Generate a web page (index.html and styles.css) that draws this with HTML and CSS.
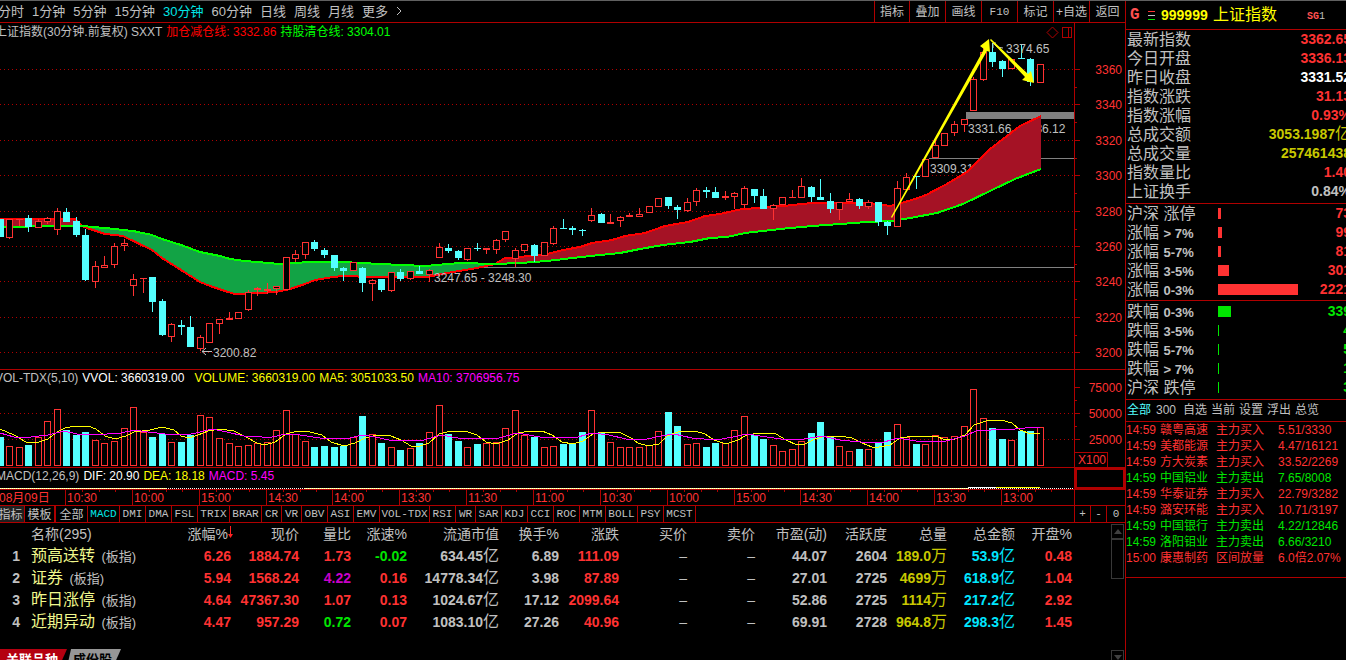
FILE: index.html
```html
<!DOCTYPE html>
<html lang="zh-CN">
<head>
<meta charset="utf-8">
<title>上证指数 999999</title>
<link rel="stylesheet" href="styles.css">
</head>
<body>
<div class="app">
<main class="main">
  <nav class="toolbar">
    <div class="periods">
      <button>分时</button><button>1分钟</button><button>5分钟</button><button>15分钟</button><button class="on">30分钟</button><button>60分钟</button><button>日线</button><button>周线</button><button>月线</button><button>更多</button>
      <button aria-label="展开"><svg width="6" height="10" viewBox="0 0 6 10"><path d="M1 1L5 5L1 9" fill="none" stroke="#c0c0c0"/></svg></button>
    </div>
    <div class="tools">
      <button>指标</button><button>叠加</button><button>画线</button><button class="mono">F10</button><button>标记</button><button>+自选</button><button>返回</button>
    </div>
  </nav>

  <section class="pane">
    <div class="legend first"><span>上证指数(30分钟.前复权) SXXT</span><span class="pure-red">加仓减仓线: 3332.86</span><span class="lime">持股清仓线: 3304.01</span></div>
    <svg class="plot" viewBox="0 23 1125 347">
      <g class="grid">
        <path d="M0 69.5H1074M0 104.5H1074M0 140.5H1074M0 175.5H1074M0 211.5H1074M0 246.5H1074M0 281.5H1074M0 317.5H1074M0 352.5H1074"/>
      </g>
      <path class="axis" d="M1074.5 23V370M0 369.5H1125M1075 69.5h5M1075 104.5h5M1075 140.5h5M1075 175.5h5M1075 211.5h5M1075 246.5h5M1075 281.5h5M1075 317.5h5M1075 352.5h5M1075 87.5h2M1075 122.5h2M1075 158.5h2M1075 193.5h2M1075 229.5h2M1075 264.5h2M1075 299.5h2M1075 335.5h2"/>
      <g class="scale">
        <text x="1122" y="74">3360</text><text x="1122" y="109">3340</text><text x="1122" y="145">3320</text><text x="1122" y="180">3300</text><text x="1122" y="216">3280</text><text x="1122" y="251">3260</text><text x="1122" y="286">3240</text><text x="1122" y="322">3220</text><text x="1122" y="357">3200</text>
      </g>
      <g class="gap">
        <rect x="966" y="112" width="108" height="7"/>
        <rect x="929" y="158" width="145" height="1"/>
        <rect x="483" y="267" width="591" height="1"/>
      </g>
      <g class="note">
        <text x="968" y="133">3331.66 - 3336.12</text>
        <text x="930" y="173">3309.31</text>
      </g>
      <g id="band"></g>
      <g class="note"><text x="434" y="282">3247.65 - 3248.30</text></g>
      <g id="candles"></g>
      <g class="note">
        <text x="1006" y="53">3374.65</text>
        <text x="213" y="357">3200.82</text>
        <path d="M202 351.5H212M206 348L202 351.5L206 355M993 48V43H996M993 43L997 47L1003 48"/>
      </g>
      <g class="arrow">
        <path d="M891 217L892 218L987 51L990 52L989 39L980 46L984 49Z"/>
        <path d="M990 40L991 39L1028 74L1031 71L1034 83L1022 80L1025 77Z"/>
      </g>
      <path class="axis smooth" d="M1052.500 27L1058 32.500L1052.500 38L1047 32.500Z"/>
      <path class="axis" d="M1062.500 27.500H1071.500V37.500H1062.500ZM1068.500 28V37"/>
    </svg>
  </section>

  <section class="pane">
    <div class="legend second"><span>VOL-TDX(5,10)</span><span class="white wide">VVOL: 3660319.00</span><span class="yellow">VOLUME: 3660319.00</span><span class="yellow">MA5: 3051033.50</span><span class="pink">MA10: 3706956.75</span></div>
    <svg class="plot" viewBox="0 370 1125 98">
      <path class="grid" d="M0 413.5H1074M0 439.5H1074"/>
      <path class="axis" d="M1074.500 370V468M0 467.500H1125M1075 387.500h5M1075 413.500h5M1075 439.500h5M1075 400.500h2M1075 426.500h2M1075 452.500H1107.500V467"/>
      <g class="scale"><text x="1122" y="392">75000</text><text x="1122" y="418">50000</text><text x="1122" y="444">25000</text><text x="1106" y="464">X100</text></g>
      <g id="volume"></g>
      <g id="averages"></g>
    </svg>
  </section>

  <section class="pane">
    <div class="legend third"><span>MACD(12,26,9)</span><span class="white">DIF: 20.90</span><span class="yellow">DEA: 18.18</span><span class="pink">MACD: 5.45</span></div>
    <svg class="plot" viewBox="0 468 1125 22">
      <path class="axis" d="M0 489.500H1125M1074.500 468V490"/>
      <rect class="axis focus" x="1076" y="469" width="48" height="19"/>
      <path d="M0 488.500H166M305 488.500H968" stroke="#ffff60" fill="none"/>
      <path d="M0 488.500H1074" stroke="#fff" stroke-dasharray="1 1" fill="none"/>
      <path d="M968 487.500H996" stroke="#fff" fill="none"/>
      <path d="M996 487.500H1040" stroke="#ff0" fill="none"/>
    </svg>
  </section>

  <svg class="plot" viewBox="0 490 1125 16">
    <g id="times" class="times"></g>
    <path class="axis" d="M0 505.500H1125M1074.500 490V506"/>
  </svg>

  <nav class="indicators">
    <button class="cjk cur">指标</button><button class="cjk mid">模板</button><button class="cjk last">全部</button><button class="n4 on">MACD</button><button class="n3">DMI</button><button class="n3">DMA</button><button class="n3">FSL</button><button class="n4">TRIX</button><button class="n4">BRAR</button><button class="n2">CR</button><button class="n2">VR</button><button class="n3">OBV</button><button class="n3">ASI</button><button class="n3">EMV</button><button class="n7">VOL-TDX</button><button class="n3">RSI</button><button class="n2">WR</button><button class="n3">SAR</button><button class="n3">KDJ</button><button class="n3">CCI</button><button class="n3">ROC</button><button class="n3">MTM</button><button class="n4">BOLL</button><button class="n3">PSY</button><button class="n4">MCST</button>
    <div class="zoomers"><button>+</button><button>-</button><button>0</button></div>
  </nav>

  <section class="related">
    <table class="stocks">
      <colgroup><col class="c-no"><col><col class="c-chg"><col class="c-price"><col class="c-vr"><col class="c-spd"><col class="c-cap"><col class="c-60"><col class="c-60"><col class="c-68"><col class="c-68"><col class="c-pe"><col class="c-act"><col class="c-60"><col class="c-68"><col class="c-57"></colgroup>
      <thead><tr><th></th><th class="name">名称(295)</th><th class="sorted">涨幅%<svg width="5" height="13" viewBox="0 0 5 13"><path d="M2 0H3V8H5L2.500 12L0 8H2Z" fill="#f22"/></svg></th><th>现价</th><th>量比</th><th>涨速%</th><th>流通市值</th><th>换手%</th><th>涨跌</th><th>买价</th><th>卖价</th><th>市盈(动)</th><th>活跃度</th><th>总量</th><th>总金额</th><th>开盘%</th></tr></thead>
      <tbody>
        <tr><td class="no">1</td><td class="name">预高送转 <small>(板指)</small></td><td class="red">6.26</td><td class="red">1884.74</td><td class="red">1.73</td><td class="green">-0.02</td><td>634.45<i>亿</i></td><td>6.89</td><td class="red">111.09</td><td class="none">–</td><td class="none">–</td><td>44.07</td><td>2604</td><td class="gold">189.0<i>万</i></td><td class="aqua">53.9<i>亿</i></td><td class="red">0.48</td></tr>
        <tr><td class="no">2</td><td class="name">证券 <small>(板指)</small></td><td class="red">5.94</td><td class="red">1568.24</td><td class="purple">4.22</td><td class="red">0.16</td><td>14778.34<i>亿</i></td><td>3.98</td><td class="red">87.89</td><td class="none">–</td><td class="none">–</td><td>27.01</td><td>2725</td><td class="gold">4699<i>万</i></td><td class="aqua">618.9<i>亿</i></td><td class="red">1.04</td></tr>
        <tr><td class="no">3</td><td class="name">昨日涨停 <small>(板指)</small></td><td class="red">4.64</td><td class="red">47367.30</td><td class="red">1.07</td><td class="red">0.13</td><td>1024.67<i>亿</i></td><td>17.12</td><td class="red">2099.64</td><td class="none">–</td><td class="none">–</td><td>52.86</td><td>2725</td><td class="gold">1114<i>万</i></td><td class="aqua">217.2<i>亿</i></td><td class="red">2.92</td></tr>
        <tr><td class="no">4</td><td class="name">近期异动 <small>(板指)</small></td><td class="red">4.47</td><td class="red">957.29</td><td class="green">0.72</td><td class="red">0.07</td><td>1083.10<i>亿</i></td><td>27.26</td><td class="red">40.96</td><td class="none">–</td><td class="none">–</td><td>69.91</td><td>2728</td><td class="gold">964.8<i>万</i></td><td class="aqua">298.3<i>亿</i></td><td class="red">1.45</td></tr>
      </tbody>
    </table>
    <div class="scroll">
      <button aria-label="向上"><svg width="8" height="5" viewBox="0 0 8 5"><path d="M4 0L8 5H0Z" fill="#404040"/></svg></button>
      <div class="thumb"></div>
      <button class="down" aria-label="向下"><svg width="8" height="5" viewBox="0 0 8 5"><path d="M0 0H8L4 5Z" fill="#404040"/></svg></button>
    </div>
  </section>
  <nav class="sheets"><button class="active">关联品种</button><button>成份股</button></nav>
</main>

<aside class="side">
  <header class="symbol">
    <b class="g">G</b>
    <svg width="7" height="9" viewBox="0 0 7 9"><path d="M0 .5H7" stroke="#ff3232"/><path d="M0 4.500H7" stroke="#c0c0c0"/><path d="M0 8.500H7" stroke="#00e600"/></svg>
    <b class="code">999999</b><span class="title">上证指数</span><span class="sg"><b>SG</b>1</span>
  </header>
  <table class="quote">
    <tr><th>最新指数</th><td class="red">3362.65</td></tr>
    <tr><th>今日开盘</th><td class="red">3336.13</td></tr>
    <tr><th>昨日收盘</th><td class="white">3331.52</td></tr>
    <tr><th>指数涨跌</th><td class="red">31.13</td></tr>
    <tr><th>指数涨幅</th><td class="red">0.93%</td></tr>
    <tr><th>总成交额</th><td class="gold">3053.1987<i>亿</i></td></tr>
    <tr><th>总成交量</th><td class="gold">257461438</td></tr>
    <tr><th>指数量比</th><td class="red">1.40</td></tr>
    <tr><th>上证换手</th><td>0.84%</td></tr>
  </table>
  <table class="quote spread up">
    <tr><th>沪深 涨停</th><td class="bar"><div style="width:3px"></div></td><td>73</td></tr>
    <tr><th>涨幅 <b>&gt; 7%</b></th><td class="bar"><div style="width:4px"></div></td><td>99</td></tr>
    <tr><th>涨幅 <b>5-7%</b></th><td class="bar"><div style="width:3px"></div></td><td>81</td></tr>
    <tr><th>涨幅 <b>3-5%</b></th><td class="bar"><div style="width:11px"></div></td><td>301</td></tr>
    <tr><th>涨幅 <b>0-3%</b></th><td class="bar"><div style="width:80px"></div></td><td>2221</td></tr>
  </table>
  <table class="quote spread fall">
    <tr><th>跌幅 <b>0-3%</b></th><td class="bar"><div style="width:13px"></div></td><td>339</td></tr>
    <tr><th>跌幅 <b>3-5%</b></th><td class="bar"><div style="width:1px"></div></td><td>4</td></tr>
    <tr><th>跌幅 <b>5-7%</b></th><td class="bar"><div style="width:1px"></div></td><td>5</td></tr>
    <tr><th>跌幅 <b>&gt; 7%</b></th><td class="bar"><div style="width:1px"></div></td><td>1</td></tr>
    <tr><th>沪深 跌停</th><td class="bar"><div style="width:1px"></div></td><td>3</td></tr>
  </table>
  <nav class="filters"><button class="on">全部</button><button class="count">300</button><button>自选</button><button>当前</button><button>设置</button><button>浮出</button><button>总览</button></nav>
  <table class="feed">
    <tr class="red"><td>14:59</td><td>赣粤高速</td><td>主力买入</td><td>5.51/3330</td></tr>
    <tr class="red"><td>14:59</td><td>美都能源</td><td>主力买入</td><td>4.47/16121</td></tr>
    <tr class="red"><td>14:59</td><td>方大炭素</td><td>主力买入</td><td>33.52/2269</td></tr>
    <tr class="green"><td>14:59</td><td>中国铝业</td><td>主力卖出</td><td>7.65/8008</td></tr>
    <tr class="red"><td>14:59</td><td>华泰证券</td><td>主力买入</td><td>22.79/3282</td></tr>
    <tr class="red"><td>14:59</td><td>潞安环能</td><td>主力买入</td><td>10.71/3197</td></tr>
    <tr class="green"><td>14:59</td><td>中国银行</td><td>主力卖出</td><td>4.22/12846</td></tr>
    <tr class="green"><td>14:59</td><td>洛阳钼业</td><td>主力卖出</td><td>6.66/3210</td></tr>
    <tr class="red"><td>15:00</td><td>康惠制药</td><td>区间放量</td><td>6.0倍2.07%</td></tr>
  </table>
</aside>
</div>
<script src="chart.js"></script>
</body>
</html>
```
FILE: styles.css
```css
* { box-sizing: border-box; }
body {
  margin: 0;
  background: #000;
  color: #c0c0c0;
  font: 12px/16px "Liberation Sans", "Noto Sans CJK SC", sans-serif;
  overflow: hidden;
}
button {
  background: none;
  border: 0;
  padding: 0;
  margin: 0;
  color: inherit;
  font: inherit;
  white-space: nowrap;
}
table { border-collapse: separate; border-spacing: 0; }
th, td { padding: 0; font-weight: normal; white-space: nowrap; }
i { font-style: normal; font-weight: 400; font-size: 16px; }

.app {
  display: grid;
  grid-template-columns: minmax(0, 1fr) 221px;
  height: 100vh;
  border-top: 1px solid #606060;
  overflow: hidden;
}
.main { display: flex; flex-direction: column; min-height: 0; overflow: hidden; }

.red { color: #ff3232; }
.green { color: #00e600; }
.gold { color: #c8c800; }
.aqua { color: #00e6ff; }
.purple { color: #c800c8; }
.white { color: #fff; }
.yellow { color: #ff0; }
.pink { color: #f0f; }
.pure-red { color: #f00; }
.lime { color: #0f0; }
.on { color: #00e6e6; }

.toolbar {
  flex: none;
  display: flex;
  justify-content: space-between;
  height: 22px;
  border-bottom: 1px solid #b00000;
}
.periods { display: flex; align-items: center; gap: 8px; margin-left: -2px; font-size: 13px; }
.tools { display: flex; }
.tools button { width: 36px; border-left: 1px solid #b00000; }
.tools button:first-child { width: 35px; }
.mono { font-family: "Liberation Mono", monospace; font-size: 11px; }

.pane { flex: none; display: grid; position: relative; }
.pane > * { grid-area: 1 / 1; }
.legend { z-index: 1; display: flex; gap: 4px; white-space: nowrap; height: 16px; }
.first { margin-left: -5px; padding-top: 1px; }
.second { margin-left: -5px; }
.second .wide { margin-right: 6px; }
.third { margin-left: -4px; }

.plot { display: block; flex: none; width: 100%; height: auto; shape-rendering: crispEdges; }
.grid { stroke: #b00000; stroke-dasharray: 1 3; fill: none; }
.axis { stroke: #b00000; fill: none; }
.focus { stroke-width: 2; }
.smooth, .arrow { shape-rendering: geometricPrecision; }
.scale { fill: #ff3232; text-anchor: end; }
.gap { fill: #808080; }
.note { fill: #c0c0c0; }
.note path { fill: none; stroke: #c0c0c0; shape-rendering: auto; }
.arrow { fill: #ff0; }
.times { fill: #ff3232; }
.times path { fill: none; stroke: #b00000; }

.rise { fill: #000; stroke: #ff3232; }
.fall-body { fill: #54ffff; stroke: #54ffff; }

.indicators { flex: none; display: flex; height: 17px; border-bottom: 1px solid #b00000; line-height: 16px; }
.indicators button { border-right: 1px solid #b00000; font-family: "Liberation Mono", monospace; font-size: 11px; }
.indicators .cjk { width: 32px; font: 12px/16px "Noto Sans CJK SC", sans-serif; }
.indicators .cur { width: 25px; background: #202020; text-indent: -3px; }
.indicators .mid { width: 31px; border-right-width: 2px; }
.indicators .n2 { width: 20px; }
.indicators .n3 { width: 26px; }
.indicators .n4 { width: 32px; }
.indicators .n7 { width: 50px; }
.zoomers { display: flex; margin-left: auto; border-left: 1px solid #b00000; }
.zoomers button { width: 16px; }
.zoomers button:last-child { width: 18px; border-right: 0; }

.related { flex: 1 1 0; min-height: 0; display: flex; gap: 39px; }
.stocks { flex: 1; table-layout: fixed; align-self: flex-start; text-align: right; }
.stocks th { height: 22px; font-size: 14px; }
.stocks td { height: 22px; font-size: 14px; font-weight: bold; line-height: 20px; }
.stocks .no { padding-right: 2px; }
.stocks .none { font-weight: normal; }
.stocks .sorted svg { margin-right: -2px; }
.stocks .name { padding-left: 9px; text-align: left; }
.stocks td.name { color: #f0f88c; font-size: 16px; font-weight: 400; }
.stocks small { color: #c0c0c0; font-size: 13px; margin-left: 2px; }
.c-no { width: 22px; }
.c-chg { width: 60px; }
.c-price { width: 68px; }
.c-vr { width: 52px; }
.c-spd { width: 56px; }
.c-cap { width: 92px; }
.c-60 { width: 60px; }
.c-68 { width: 68px; }
.c-pe { width: 72px; }
.c-act { width: 60px; }
.c-57 { width: 57px; }
.scroll { flex: none; width: 14px; padding-top: 1px; display: flex; flex-direction: column; }
.scroll button, .thumb { border: 1px solid #383838; width: 13px; }
.scroll button { height: 15px; flex: none; display: flex; align-items: center; justify-content: center; }
.thumb { height: 40px; }
.scroll .down { margin-top: auto; margin-bottom: -16px; }

.sheets { flex: none; align-self: flex-start; display: flex; height: 11px; overflow: hidden; }
.sheets button {
  height: 18px;
  padding: 0 9px 0 6px;
  font: bold 13px/17px "Noto Sans CJK SC", sans-serif;
  background: #969696;
  color: #000;
  clip-path: polygon(4px 0, 100% 0, calc(100% - 8px) 100%, 0 100%);
}
.sheets .active { background: #b40010; color: #fff; padding-right: 9px; clip-path: polygon(0 0, 100% 0, calc(100% - 8px) 100%, 0 100%); }

.side { border-left: 1px solid #b00000; overflow: hidden; }
.side > * { width: calc(100% + 5px); }
.symbol { display: flex; align-items: center; height: 29px; padding-left: 4px; border-bottom: 1px solid #b00000; }
.symbol .g { width: 18px; font: bold 16px/20px "Liberation Mono", monospace; color: #ff5050; }
.symbol .code { margin-left: 6px; width: 52px; font-size: 14px; color: #ff0; }
.symbol .title { font-size: 16px; color: #ff0; }
.symbol .sg { margin-left: 30px; font: 10px/14px "Liberation Mono", monospace; padding-top: 4px; }
.sg b { color: #ff5050; }
.quote { border-bottom: 1px solid #b00000; line-height: 19px; }
.quote th, .quote td { height: 19px; vertical-align: top; }
.quote tr:last-child > * { height: 21px; }
.quote.up tr:last-child > * { height: 20px; }
.quote.fall { padding-top: 1px; }
.quote th { padding-left: 1px; text-align: left; font-size: 16px; }
.quote th b { font-size: 13px; line-height: 13px; font-weight: bold; }
.quote td { text-align: right; font-size: 14px; font-weight: bold; }
.quote i { line-height: 16px; }
.spread th { width: 92px; }
.quote .bar { padding-top: 4px; }
.bar div { height: 11px; background: #ff3232; }
.up td { color: #ff3232; }
.fall td { color: #00e600; }
.fall .bar div { background: #00e600; }
.filters { display: flex; gap: 4px; height: 22px; padding: 2px 0 0 1px; border-bottom: 1px solid #b00000; }
.filters button { height: 16px; }
.filters .on { color: #54ffff; }
.filters .count { margin: 0 3px 0 1px; }
.feed { border-bottom: 1px solid #b00000; }
.feed td { height: 16px; line-height: 16px; width: 62px; }
.feed td:first-child { width: 34px; }
.feed td:nth-child(2) { width: 56px; }
.feed td:last-child { width: auto; }
.feed tr:last-child td { height: 27px; padding-bottom: 11px; }
```
FILE: chart.js
```js
const put = (id, html) => { document.getElementById(id).innerHTML = html; };
const centre = i => Math.floor(9.545 * i) + 0.5;

// [falling, high, top, bottom, low] in plot units
const candles = [
[1,219,219,237,237],[0,219,219,238,239],[0,219,219,220,226],[1,215,218,227,232],[0,219,221,228,228],[0,217,218,222,224],[0,208,211,230,235],[1,208,212,222,222],[1,217,221,235,237],[1,229,235,280,281],
[0,261,266,282,288],[0,256,265,268,268],[0,243,246,265,268],[0,239,243,246,251],[0,274,279,286,296],[0,278,278,279,293],[1,277,277,302,312],[1,299,301,335,336],[0,323,324,337,342],[1,320,325,327,335],
[1,316,327,347,347],[0,335,337,349,351],[0,323,323,343,343],[0,319,319,324,334],[0,312,318,320,320],[0,312,312,319,319],[0,290,292,310,311],[0,287,288,290,296],[0,283,289,291,294],[0,286,286,289,295],
[0,257,257,290,290],[0,250,254,259,262],[0,242,242,255,259],[1,240,242,249,251],[1,248,250,255,258],[1,255,255,268,271],[1,267,268,271,281],[0,262,262,271,271],[1,267,268,283,292],[0,279,280,284,301],
[1,279,279,290,292],[0,272,272,291,292],[1,269,272,279,281],[0,271,271,279,280],[1,266,271,274,274],[0,269,270,275,282],[0,243,247,258,258],[1,244,248,251,253],[1,250,251,258,260],[0,248,248,260,261],
[1,243,248,249,251],[0,248,248,250,254],[0,239,240,250,254],[0,231,231,240,242],[0,248,250,259,267],[0,244,244,251,253],[1,244,245,256,262],[0,242,242,256,256],[0,226,228,244,245],[1,219,228,229,229],
[1,226,228,230,235],[1,229,230,231,236],[0,208,215,221,222],[1,213,214,223,223],[0,214,222,224,224],[0,216,217,221,227],[0,213,215,217,217],[0,208,214,217,217],[0,206,206,213,213],[0,198,198,207,207],
[1,197,197,206,209],[1,205,207,210,219],[0,198,202,211,212],[0,188,190,202,206],[1,187,190,192,198],[1,187,192,198,198],[0,191,196,198,200],[0,192,193,197,209],[0,186,188,205,208],[1,189,189,196,203],
[1,189,196,209,209],[0,204,205,209,220],[0,197,197,205,205],[0,190,197,198,198],[0,178,186,198,198],[1,186,187,197,202],[1,179,197,200,200],[1,193,201,209,213],[0,202,202,210,220],[0,193,199,202,202],
[1,198,199,206,209],[0,200,202,207,209],[1,202,202,222,226],[1,221,222,226,235],[0,181,188,227,227],[0,173,177,190,190],[1,176,176,177,189],[0,159,159,177,177],[0,141,145,158,158],[0,133,133,146,146],
[0,121,124,133,136],[0,119,119,125,132],[0,77,79,111,111],[0,46,52,80,81],[1,43,52,62,67],[1,60,61,69,77],[0,59,59,69,69],[1,44,58,59,59],[1,58,59,82,86],[0,64,64,83,83]];

put('candles', candles.map(([down, hi, top, bottom, low], i) => {
  const x = centre(i);
  const body = down
    ? `<rect x="${x - 3.5}" y="${top}" width="7" height="${bottom - top}" stroke="none"/>`
    : `<rect x="${x - 3}" y="${top + 0.5}" width="6" height="${Math.max(bottom - top - 1, 0.01)}"/>`;
  return `<g class="${down ? 'fall-body' : 'rise'}"><path d="M${x} ${hi}V${low}"/>${body}</g>`;
}).join(''));

const tops = [437,446,447,445,437,421,409,430,435,432,440,443,441,428,407,432,437,434,442,442,435,415,417,438,443,446,445,443,442,430,410,434,441,447,446,447,446,437,416,434,443,447,450,448,443,432,405,434,441,447,444,443,442,428,410,435,437,
447,446,444,443,432,410,432,442,447,447,447,445,431,412,426,444,443,447,443,443,430,416,435,439,445,451,449,441,433,422,437,446,451,449,449,442,432,424,437,444,444,435,437,436,426,389,418,428,439,440,431,431,427];
put('volume', tops.map((y, i) => {
  const x = centre(i);
  return candles[i][0]
    ? `<g class="fall-body"><rect stroke="none" x="${x - 3.5}" y="${y}" width="7" height="${466 - y}"/></g>`
    : `<rect class="rise" x="${x - 3}" y="${y + 0.5}" width="6" height="${465 - y}"/>`;
}).join(''));

const fast = '0,219 75,219 82,226 90,229 105,234 123,236 152,250 162,258 181,270 192,277 200,282 210,286 228,292 235,294 260,293 276,292 290,289 305,284 315,280 333,277 343,276 372,277 427,277 447,273 477,268 495,264 505,258 520,257 547,254 563,250 580,247 592,243 612,240 625,236 645,233 665,226 688,222 705,216 720,214 742,209 760,208 783,206 812,203 870,203 890,206 905,202 915,199 926,195 945,185 967,172 980,159 990,149 1020,126 1041,116'.split(' ');
const slow = '0,227 60,226 82,226 105,228 133,231 152,235 162,239 181,245 200,252 220,256 230,259 245,261 280,264 310,262 343,262 380,264 425,266 460,263 495,264 520,263 547,261 590,256 620,253 640,249 663,245 690,242 710,238 727,237 745,233 780,229 812,226 840,224 867,222 892,221 910,218 937,213 963,204 990,191 1015,179 1041,169'.split(' ');
const between = (a, b) => {
  const cut = list => list.filter(p => { const x = parseFloat(p); return x >= a && x <= b; });
  return cut(fast).concat(cut(slow).reverse()).join(' ');
};
put('band',
  `<polygon points="${between(0, 82)}" fill="#a51225"/><polygon points="${between(82, 495)}" fill="#12a345"/><polygon points="${between(495, 1041)}" fill="#a51225"/>` +
  `<polyline points="${fast.join(' ')}" fill="none" stroke="#f00" stroke-width="2"/><polyline points="${slow.join(' ')}" fill="none" stroke="#0f0" stroke-width="2"/>`);

const ma5 = '0,429 14,435 26,442 36,443 48,439 57,432 65,428 76,426 88,426 96,429 105,436 115,439 126,436 134,432 150,430 162,427 174,430 181,436 189,438 198,435 208,431 220,429 234,431 246,437 257,443 265,445 275,442 286,434 298,431 310,432 322,435 331,442 344,446 355,443 365,438 377,435 391,436 401,440 411,446 420,446 429,443 439,434 451,431 468,432 477,435 486,442 496,444 508,440 518,433 530,431 542,431 552,435 562,442 573,444 583,441 593,434 605,432 621,433 631,438 638,443 648,446 659,444 667,436 678,432 695,431 705,434 714,440 726,444 738,440 747,435 760,433 776,434 786,440 797,445 805,444 815,439 826,436 840,436 852,438 862,443 872,447 879,447 890,445 900,438 915,436 936,436 945,440 955,439 965,435 974,425 986,421 1001,420 1012,423 1020,430 1031,434 1040,433';
const ma10 = '0,433 14,437 31,437 48,435 64,431 77,434 107,434 121,433 134,430 148,432 165,434 186,435 196,433 212,429 227,432 244,436 262,437 272,437 286,434 300,435 320,438 346,439 362,435 375,437 389,440 406,441 424,440 441,435 458,438 482,439 499,438 517,433 540,437 557,438 578,437 592,433 609,435 626,439 647,439 661,436 674,434 692,438 716,440 733,437 747,434 760,436 781,439 798,440 822,436 840,440 871,443 884,442 898,438 910,440 922,442 946,441 965,436 976,431 991,430 1015,429 1036,427 1040,427';
put('averages', `<polyline points="${ma5}" fill="none" stroke="#ff0"/><polyline points="${ma10}" fill="none" stroke="#f0f"/>`);

const labels = ['10:30','10:00','15:00','14:30','14:00','13:30','11:30','11:00','10:30','10:00','15:00','14:30','14:00','13:30','13:00'];
put('times', '<text x="-1" y="502">08月09日</text>' + labels.map((t, i) => {
  const x = Math.round(65 + i * 66.86) + 0.5;
  return `<path d="M${x} 490V506M${x + 17} 490v2M${x + 34} 490v2M${x + 50} 490v2"/><text x="${x + 1.5}" y="502">${t}</text>`;
}).join(''));
```
